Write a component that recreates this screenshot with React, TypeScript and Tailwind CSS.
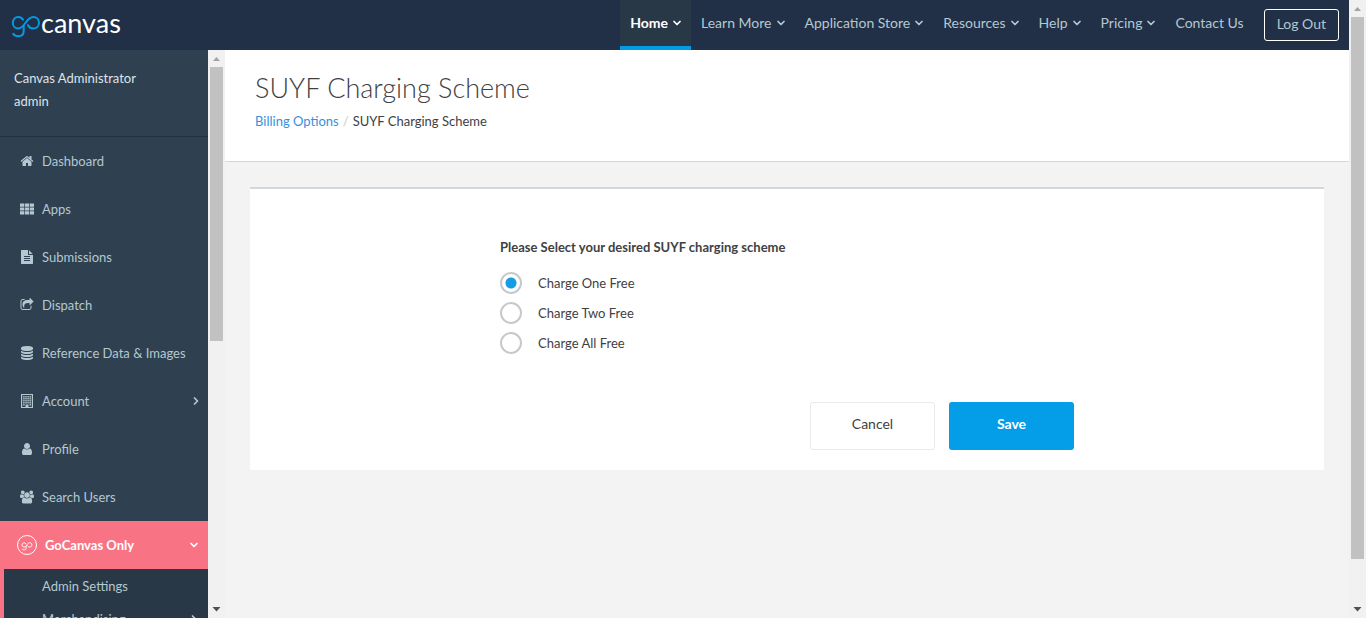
import { ReactNode } from "react";
import { ChevronDown, ChevronRight } from "lucide-react";

const icons: Record<string, { box: string; d: string }> = {
  home: {
    box: "0 0 1792 1792",
    d: "M1472 992v480q0 26-19 45t-45 19h-384v-384h-256v384h-384q-26 0-45-19t-19-45v-480q0-1 .5-3t.5-3l575-474 575 474q1 2 1 6zm223-69l-62 74q-8 9-21 11h-3q-13 0-21-7l-692-577-692 577q-12 8-24 7-13-2-21-11l-62-74q-8-10-7-23.5t11-21.5l719-599q32-26 76-26t76 26l244 204v-195q0-14 9-23t23-9h192q14 0 23 9t9 23v408l219 182q10 8 11 21.5t-7 23.5z",
  },
  grid: {
    box: "0 0 14 14",
    d: "M0 1.500h4.200v3.200H0zM4.900 1.500h4.200v3.200H4.900zM9.800 1.500H14v3.200H9.800zM0 5.400h4.200v3.200H0zM4.900 5.400h4.200v3.200H4.900zM9.800 5.400H14v3.200H9.800zM0 9.300h4.200v3.200H0zM4.900 9.300h4.200v3.200H4.900zM9.800 9.300H14v3.200H9.800z",
  },
  file: {
    box: "0 0 1792 1792",
    d: "M1596 476q14 14 28 36h-472v-472q22 14 36 28zm-476 164h544v1056q0 40-28 68t-68 28h-1344q-40 0-68-28t-28-68v-1600q0-40 28-68t68-28h800v544q0 40 28 68t68 28zm160 736v-64q0-14-9-23t-23-9h-704q-14 0-23 9t-9 23v64q0 14 9 23t23 9h704q14 0 23-9t9-23zm0-256v-64q0-14-9-23t-23-9h-704q-14 0-23 9t-9 23v64q0 14 9 23t23 9h704q14 0 23-9t9-23zm0-256v-64q0-14-9-23t-23-9h-704q-14 0-23 9t-9 23v64q0 14 9 23t23 9h704q14 0 23-9t9-23z",
  },
  share: {
    box: "0 0 1792 1792",
    d: "M1472 989v259q0 119-84.5 203.5t-203.5 84.5h-832q-119 0-203.5-84.5t-84.5-203.5v-832q0-119 84.5-203.5t203.5-84.5h255q13 0 22.5 9.5t9.5 22.5q0 27-26 32-77 26-133 60-10 4-16 4h-112q-66 0-113 47t-47 113v832q0 66 47 113t113 47h832q66 0 113-47t47-113v-214q0-19 18-29 28-13 54-37 16-16 35-8 21 9 21 29zm237-496l-384 384q-18 19-45 19-12 0-25-5-39-17-39-59v-192h-160q-323 0-438 131-119 137-74 473 3 23-20 34-8 2-12 2-16 0-26-13-10-14-21-31t-39.5-68.5-49.5-99.5-38.5-114-17.5-122q0-49 3.5-91t14-90 28-88 47-81.5 68.5-74 94.5-61.5 124.5-48.5 159.5-30.5 196.5-11h160v-192q0-42 39-59 13-5 25-5 26 0 45 19l384 384q19 19 19 45t-19 45z",
  },
  database: {
    box: "0 0 1792 1792",
    d: "M896 768q237 0 443-43t325-127v170q0 69-103 128t-280 93.5-385 34.5-385-34.5-280-93.5-103-128v-170q119 84 325 127t443 43zm0 768q237 0 443-43t325-127v170q0 69-103 128t-280 93.5-385 34.5-385-34.5-280-93.5-103-128v-170q119 84 325 127t443 43zm0-384q237 0 443-43t325-127v170q0 69-103 128t-280 93.5-385 34.5-385-34.5-280-93.5-103-128v-170q119 84 325 127t443 43zm0-1152q208 0 385 34.5t280 93.5 103 128v128q0 69-103 128t-280 93.5-385 34.5-385-34.5-280-93.5-103-128v-128q0-69 103-128t280-93.5 385-34.5z",
  },
  building: {
    box: "0 0 14 14",
    d: "M1 0h12v14h-12zM2.200 1v12H5.5v-2.5h3V13h3.300V1zM3.2 2h1.4v1.400H3.2zM5.3 2h1.4v1.400H5.3zM7.400 2h1.4v1.400H7.400zM9.500 2h1.4v1.400H9.500zM3.2 4h1.4v1.400H3.2zM5.3 4h1.4v1.400H5.3zM7.400 4h1.4v1.400H7.400zM9.500 4h1.4v1.400H9.500zM3.2 6h1.4v1.400H3.2zM5.3 6h1.4v1.400H5.3zM7.400 6h1.4v1.400H7.400zM9.500 6h1.4v1.400H9.500zM3.2 8h1.4v1.400H3.2zM5.3 8h1.4v1.400H5.3zM7.400 8h1.4v1.400H7.400zM9.500 8h1.4v1.400H9.500zM3.2 10h1.4v1.400H3.2zM9.500 10h1.4v1.400H9.500z",
  },
  user: {
    box: "0 0 1792 1792",
    d: "M1536 1399q0 109-62.5 187t-150.5 78h-854q-88 0-150.5-78t-62.5-187q0-85 8.5-160.5t31.5-152 58.5-131 94-89 134.5-34.5q131 128 313 128t313-128q76 0 134.5 34.5t94 89 58.5 131 31.5 152 8.5 160.5zm-256-887q0 159-112.5 271.5t-271.5 112.5-271.5-112.5-112.5-271.5 112.5-271.5 271.5-112.5 271.5 112.5 112.5 271.5z",
  },
  group: {
    box: "0 0 1920 1792",
    d: "M593 896q-162 5-265 128h-134q-82 0-138-40.5t-56-118.5q0-353 124-353 6 0 43.5 21t97.5 42.5 119 21.5q67 0 133-23-5 37-5 66 0 139 81 256zm1071 637q0 120-73 189.5t-194 69.5h-874q-121 0-194-69.5t-73-189.5q0-53 3.5-103.5t14-109 26.5-108.5 43-97.5 62-81 85.5-53.5 111.5-20q10 0 43 21.5t73 48 107 48 135 21.5 135-21.5 107-48 73-48 43-21.5q61 0 111.5 20t85.5 53.5 62 81 43 97.5 26.5 108.5 14 109 3.5 103.5zm-1024-1277q0 106-75 181t-181 75-181-75-75-181 75-181 181-75 181 75 75 181zm704 384q0 159-112.5 271.5t-271.5 112.5-271.5-112.5-112.5-271.5 112.5-271.5 271.5-112.5 271.5 112.5 112.5 271.5zm576 225q0 78-56 118.5t-138 40.5h-134q-103-123-265-128 81-117 81-256 0-29-5-66 66 23 133 23 59 0 119-21.5t97.5-42.5 43.5-21q124 0 124 353zm-128-609q0 106-75 181t-181 75-181-75-75-181 75-181 181-75 181 75 75 181z",
  },
};

const topLinks = [
  { label: "Home", menu: true, active: true },
  { label: "Learn More", menu: true },
  { label: "Application Store", menu: true },
  { label: "Resources", menu: true },
  { label: "Help", menu: true },
  { label: "Pricing", menu: true },
  { label: "Contact Us" },
];

const sideLinks = [
  { label: "Dashboard", icon: "home" },
  { label: "Apps", icon: "grid" },
  { label: "Submissions", icon: "file" },
  { label: "Dispatch", icon: "share" },
  { label: "Reference Data & Images", icon: "database" },
  { label: "Account", icon: "building", more: true },
  { label: "Profile", icon: "user" },
  { label: "Search Users", icon: "group" },
];

const schemes = ["Charge One Free", "Charge Two Free", "Charge All Free"];

function Glyph({ name }: { name: string }) {
  return (
    <svg viewBox={icons[name].box} className="size-3.5 shrink-0" fill="currentColor" fillRule="evenodd" aria-hidden="true">
      <path d={icons[name].d} />
    </svg>
  );
}

function GoMark({ className, width }: { className: string; width: number }) {
  return (
    <svg viewBox="0 0 30 24" className={className} fill="none" stroke="currentColor" strokeWidth={width} strokeLinecap="round" aria-hidden="true">
      <path d="M12 4.600C11 3 9.300 2 7.2 2 4.200 2 1.8 4.4 1.8 7.8S4.2 13.500 7.2 13.500c3.400 0 5.100-2.400 7.400-5.700S18.800 2 22.400 2c3.200 0 5.600 2.500 5.600 5.800S25.600 13.500 22.400 13.500c-2.600 0-4.400-1.400-5.400-3.300" />
      <path d="M12.700 11V16c0 3.400-2 5.200-5.400 5.200-2.300 0-4-.8-5-2.300" />
    </svg>
  );
}

function ScrollTrack({ children, arrow }: { children: ReactNode; arrow: string }) {
  return (
    <div className="flex w-[17px] shrink-0 flex-col items-center bg-[#f1f1f1]" aria-hidden="true">
      <svg viewBox="0 0 17 17" className={"size-[17px] shrink-0 " + arrow} fill="currentColor">
        <path d="M5 11h7L8.500 7z" />
      </svg>
      <div className="flex min-h-0 w-[13px] flex-1 flex-col">{children}</div>
      <svg viewBox="0 0 17 17" className="size-[17px] shrink-0 text-[#505050]" fill="currentColor">
        <path d="M4.500 6h8L8.500 10.500z" />
      </svg>
    </div>
  );
}

function TopBar() {
  return (
    <header className="flex h-[50px] shrink-0 items-stretch justify-between bg-[#213047]">
      <a href="#" className="flex items-center pl-[11px] text-white" aria-label="gocanvas">
        <GoMark className="mt-1 h-6 w-[30px] text-[#039be5]" width={2} />
        <span className="-mt-1 text-[27px] leading-8">canvas</span>
      </a>
      <nav className="flex items-stretch text-[14px] leading-5">
        {topLinks.map((l) => (
          <a
            key={l.label}
            href="#"
            className={
              l.active
                ? "flex items-center gap-[3px] border-b-4 border-[#039be5] bg-[#293846] px-2.5 font-bold text-white"
                : "flex items-center gap-[3px] border-b-4 border-transparent px-2.5 text-[#b4c8d1]"
            }
          >
            {l.label}
            {l.menu && <ChevronDown className="-mr-0.5 size-3" strokeWidth={3.5} />}
          </a>
        ))}
        <a href="#" className="mx-2.5 flex h-8 items-center self-center rounded-[3px] border border-white px-3 pb-0.5 text-[#b4c8d1]">
          Log Out
        </a>
      </nav>
    </header>
  );
}

function Sidebar() {
  return (
    <aside className="flex w-[225px] shrink-0">
      <div className="min-h-0 flex-1 overflow-hidden bg-[#2f4050] text-[#b4c8d1]">
        <div className="h-[87px] border-b border-[#213047] px-3.5 pt-[17px] text-[13px] leading-[23px] text-[#dfe4ed]">
          <p>Canvas Administrator</p>
          <p>admin</p>
        </div>
        <nav className="text-[13px] leading-5">
          {sideLinks.map((l) => (
            <a key={l.label} href="#" className="flex h-12 items-center pr-1.5 pl-5 whitespace-nowrap">
              <Glyph name={l.icon} />
              <span className="ml-2 flex-1">{l.label}</span>
              {l.more && <ChevronRight className="size-3" strokeWidth={3.5} />}
            </a>
          ))}
          <a href="#" className="flex h-12 items-center bg-[#f87384] pr-2 pl-[17px] text-white">
            <span className="flex size-5 items-center justify-center rounded-full border border-white">
              <GoMark className="mt-0.5 h-[9px] w-3" width={2.500} />
            </span>
            <span className="ml-2 flex-1 font-bold">GoCanvas Only</span>
            <ChevronDown className="size-3" strokeWidth={3.5} />
          </a>
          <div className="border-l-4 border-[#f87384] bg-[#293846]">
            <a href="#" className="flex h-[33px] items-center pl-[38px]">Admin Settings</a>
            <a href="#" className="flex h-[34px] items-center justify-between pr-2 pl-[38px]">
              Merchandising
              <ChevronRight className="size-3" strokeWidth={3.5} />
            </a>
          </div>
        </nav>
      </div>
      <ScrollTrack arrow="text-[#a3a3a3]">
        <div className="h-[274px] bg-[#c1c1c1]" />
      </ScrollTrack>
    </aside>
  );
}

function SchemeForm() {
  return (
    <form className="border-t-2 border-[#d2d7db] bg-white px-[250px] pt-12 pb-5" onSubmit={(e) => e.preventDefault()}>
      <fieldset>
        <legend className="text-[13px] leading-5 font-bold text-[#414143]">Please Select your desired SUYF charging scheme</legend>
        <div className="pt-[11px]">
          {schemes.map((s, i) => (
            <label key={s} className="flex h-[30px] items-center gap-4 text-[13px] leading-5 text-[#414143]">
              <input
                type="radio"
                name="scheme"
                defaultChecked={i === 0}
                className="size-[22px] appearance-none rounded-full border-2 border-[#c5c9cc] bg-white checked:bg-[radial-gradient(circle,#159ce4_5px,white_6px)]"
              />
              {s}
            </label>
          ))}
        </div>
      </fieldset>
      <div className="mt-11 flex justify-end gap-3.5 text-[14px] leading-5">
        <button type="button" className="h-12 w-[125px] rounded-[3px] border border-[#e7eaec] bg-white pb-1 text-[#414143]">Cancel</button>
        <button type="submit" className="h-12 w-[125px] rounded-[3px] bg-[#049de8] pb-1 font-bold text-white">Save</button>
      </div>
    </form>
  );
}

export default function App() {
  return (
    <div className="flex h-screen overflow-hidden bg-[#f3f3f3] font-['Lato','Open_Sans',sans-serif]">
      <div className="flex min-w-0 flex-1 flex-col">
        <TopBar />
        <div className="flex min-h-0 flex-1">
          <Sidebar />
          <main className="min-w-0 flex-1">
            <div className="h-28 border-b border-[#d2d7db] bg-white px-[30px] pt-5">
              <h1 className="text-[27px] leading-9 font-light text-[#414143]">SUYF Charging Scheme</h1>
              <div className="mt-[5px] flex gap-1 text-[13px] leading-5 text-[#414143]">
                <a href="#" className="text-[#3a8fdc]">Billing Options</a>
                <span className="text-[#c8c8c8]">/</span>
                <span>SUYF Charging Scheme</span>
              </div>
            </div>
            <div className="p-[25px]">
              <SchemeForm />
            </div>
          </main>
        </div>
      </div>
      <ScrollTrack arrow="text-[#a3a3a3]">
        <div className="h-[542px] bg-[#c1c1c1]" />
      </ScrollTrack>
    </div>
  );
}
